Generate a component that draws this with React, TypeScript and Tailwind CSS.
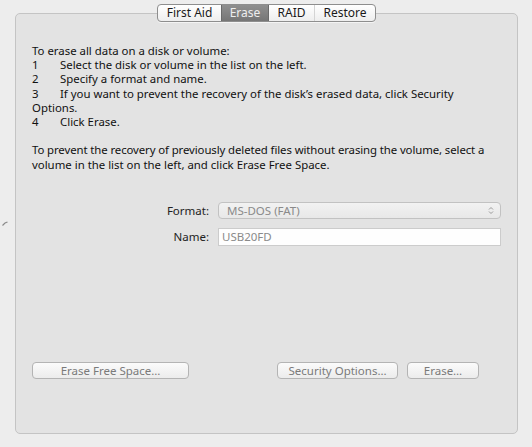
import React from 'react';

const font = { fontFamily: '"Noto Sans", "Lucida Grande", sans-serif' };

const tabs = ['First Aid', 'Erase', 'RAID', 'Restore'];

function Tabs() {
  return (
    <div className="flex h-[18px] rounded-[4px] border border-[#8e8e8e] bg-gradient-to-b from-[#ffffff] to-[#eeeeee] overflow-hidden shadow-[0_1px_0_rgba(255,255,255,0.6)]">
      {tabs.map((t, i) => {
        const active = t === 'Erase';
        const widths = ['w-[63px]', 'w-[48px]', 'w-[46px]', 'w-[60px]'];
        return (
          <div
            key={t}
            className={`${widths[i]} flex items-center justify-center text-[12px] leading-none ${
              active
                ? 'bg-gradient-to-b from-[#8f8f8f] to-[#767676] text-[#eeeeee] border-x border-[#6a6a6a]'
                : 'text-[#1a1a1a]'
            } ${i === 2 ? 'border-r border-[#d4d4d4]' : ''}`}
          >
            {t}
          </div>
        );
      })}
    </div>
  );
}

function MacButton({ label, width }: { label: string; width: string }) {
  return (
    <div
      className={`${width} h-[17px] rounded-[4px] border border-[#b4b4b4] bg-gradient-to-b from-[#fbfbfb] to-[#ececec] flex items-center justify-center text-[11.5px] text-[#7a7a7a] leading-none`}
    >
      {label}
    </div>
  );
}

export default function App() {
  const steps = [
    { n: '1', t: 'Select the disk or volume in the list on the left.' },
    { n: '2', t: 'Specify a format and name.' },
    { n: '3', t: 'If you want to prevent the recovery of the disk\u2019s erased data, click Security' },
  ];

  return (
    <div className="w-[532px] h-[447px] bg-[#ededed] flex" style={font}>
      <div className="w-[15px] flex items-center justify-start pl-[2px]">
        <svg width="6" height="5" viewBox="0 0 6 5">
          <path d="M0.5 4.5 L3 2 L5.5 1" stroke="#8a8a8a" strokeWidth="1.2" fill="none" />
        </svg>
      </div>
      <div className="flex flex-col items-center pt-[4px]">
        <div className="relative z-10">
          <Tabs />
        </div>
        <div className="-mt-[9px] w-[503px] h-[421px] rounded-[5px] border border-[#c4c4c4] bg-[#e3e3e3] pt-[30px] pl-[16px] pr-[12px] flex flex-col">
          <div className="text-[11.4px] leading-[14.2px] text-[#111111] whitespace-nowrap">
            <div>To erase all data on a disk or volume:</div>
            {steps.map((s) => (
              <div key={s.n} className="flex">
                <span className="w-[28px]">{s.n}</span>
                <span>{s.t}</span>
              </div>
            ))}
            <div>Options.</div>
            <div className="flex">
              <span className="w-[28px]">4</span>
              <span>Click Erase.</span>
            </div>
            <div className="mt-[14.2px] tracking-[-0.1px]">
              To prevent the recovery of previously deleted files without erasing the volume, select a
            </div>
            <div>volume in the list on the left, and click Erase Free Space.</div>
          </div>

          <div className="mt-[30px] grid grid-cols-[177px_283px] gap-x-[9px] gap-y-[9px] items-center text-[11.5px]">
            <div className="text-right text-[#222222]">Format:</div>
            <div className="h-[17px] rounded-[4px] border border-[#c2c2c2] bg-gradient-to-b from-[#f2f2f2] to-[#e8e8e8] flex items-center justify-between pl-[8px] pr-[6px] text-[#8a8a8a] leading-none">
              <span>MS-DOS (FAT)</span>
              <svg width="6" height="9" viewBox="0 0 6 9">
                <path d="M1 3.5 L3 1.5 L5 3.5" stroke="#9a9a9a" strokeWidth="1" fill="none" />
                <path d="M1 5.5 L3 7.5 L5 5.5" stroke="#9a9a9a" strokeWidth="1" fill="none" />
              </svg>
            </div>
            <div className="text-right text-[#222222]">Name:</div>
            <div className="h-[18px] border border-[#cccccc] bg-[#fefefe] flex items-center pl-[3px] text-[#8a8a8a] leading-none">
              USB20FD
            </div>
          </div>

          <div className="mt-[116px] flex items-center">
            <MacButton label="Erase Free Space…" width="w-[157px]" />
            <div className="flex-1" />
            <MacButton label="Security Options…" width="w-[121px]" />
            <div className="w-[9px]" />
            <MacButton label="Erase…" width="w-[72px]" />
            <div className="w-[26px]" />
          </div>
        </div>
      </div>
    </div>
  );
}
